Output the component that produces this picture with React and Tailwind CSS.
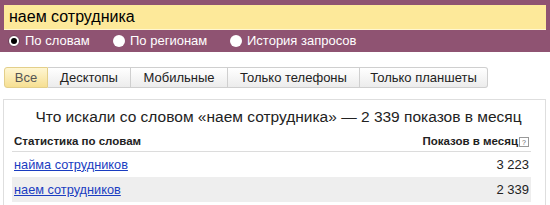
const tabs = ['Все', 'Десктопы', 'Мобильные', 'Только телефоны', 'Только планшеты'];
const tabWidths = ['w-[44px]', 'w-[83px]', 'w-[97px]', 'w-[132px]', 'w-[128px]'];

const rows = [
  { word: 'найма сотрудников', count: '3 223' },
  { word: 'наем сотрудников', count: '2 339' },
];

function Radio({ checked, label }) {
  return (
    <label className="flex items-center gap-[5px] text-[13px] text-white">
      <span
        className={
          'flex h-[12px] w-[12px] items-center justify-center rounded-full bg-white ' +
          (checked ? 'border border-[#6b3b55]' : '')
        }
      >
        {checked && <span className="h-[6px] w-[6px] rounded-full bg-black" />}
      </span>
      {label}
    </label>
  );
}

export default function App() {
  return (
    <div className="h-[205px] w-[550px] overflow-hidden bg-white font-['Liberation_Sans',Arial,sans-serif]">
      {/* search header */}
      <div className="bg-[#8f5372] px-[4px] pt-[5px]">
        <div className="flex h-[25px] items-center border-b border-[#fff6d0] bg-[#fde99a] pl-[5px] text-[16px] text-black">
          наем сотрудника
        </div>
        <div className="flex h-[22px] items-center pl-[4px]">
          <div className="w-[105px]">
            <Radio checked label="По словам" />
          </div>
          <div className="w-[117px]">
            <Radio label="По регионам" />
          </div>
          <Radio label="История запросов" />
        </div>
      </div>

      {/* device tabs */}
      <div className="mt-[15px] flex pl-[4px]">
        {tabs.map((t, i) => (
          <div
            key={t}
            className={
              'flex h-[21px] items-center justify-center border-y border-r border-[#cfcfcf] text-[13px] ' +
              tabWidths[i] +
              ' ' +
              (i === 0
                ? 'rounded-l-[3px] border-l border-[#e3cf8a] bg-gradient-to-b from-[#fff6d2] to-[#f6df92] text-[#555]'
                : 'bg-gradient-to-b from-white to-[#ececec] text-[#222]') +
              (i === tabs.length - 1 ? ' rounded-r-[3px]' : '')
            }
          >
            {t}
          </div>
        ))}
      </div>

      {/* results */}
      <div className="ml-[3px] mt-[11px] w-[543px] border border-[#dedede] px-[8px] pb-[6px]">
        <div className="flex h-[33px] items-center justify-center pl-[8px] text-[15.5px] text-[#222]">
          Что искали со словом «наем сотрудника» — 2 339 показов в месяц
        </div>
        <div className="mr-[6px]">
          <div className="flex h-[19px] items-center justify-between border-b border-[#dcdcdc] px-[2px] text-[11.5px] font-bold text-[#222]">
            <span>Статистика по словам</span>
            <span className="flex items-center gap-[1px]">
              Показов в месяц
              <span className="flex h-[10px] w-[10px] items-center justify-center border border-[#999] text-[7px] font-normal leading-none text-[#666]">
                ?
              </span>
            </span>
          </div>
          {rows.map((r, i) => (
            <div
              key={r.word}
              className={
                'flex h-[25px] items-center justify-between px-[2px] ' +
                (i % 2 === 1 ? 'bg-[#eeeeee]' : '')
              }
            >
              <a
                href="#"
                className="text-[12.75px] text-[#1a3dc1] underline decoration-[#1a3dc1]"
              >
                {r.word}
              </a>
              <span className="text-[13px] text-[#222]">{r.count}</span>
            </div>
          ))}
        </div>
      </div>
    </div>
  );
}
